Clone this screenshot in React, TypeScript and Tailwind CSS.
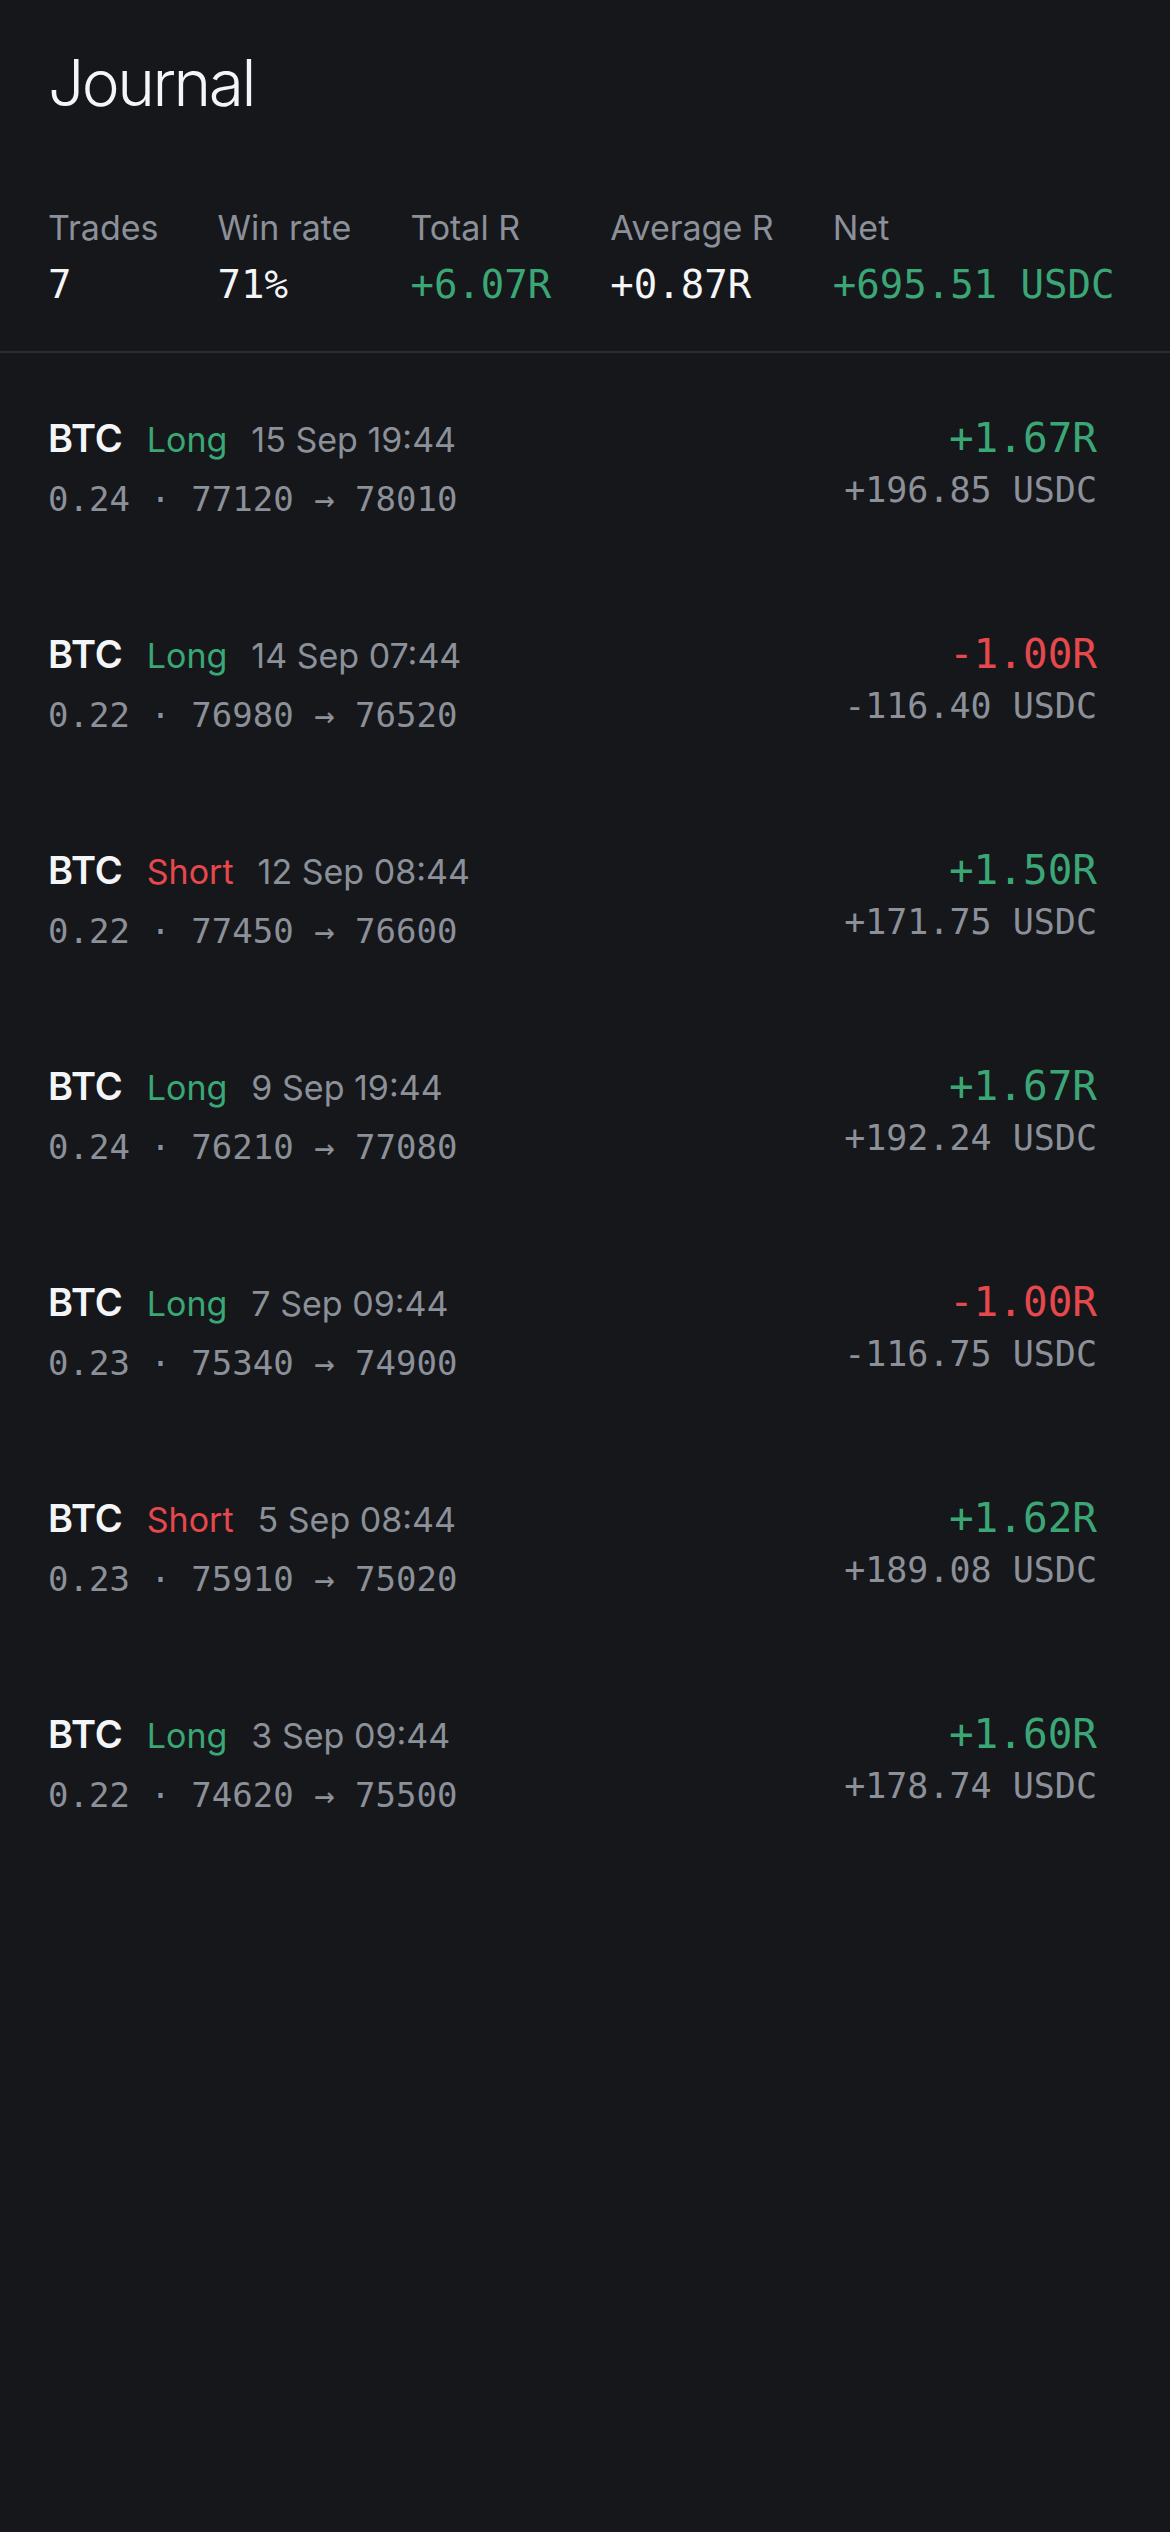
import React from "react";

type Trade = {
  side: "Long" | "Short";
  date: string;
  size: string;
  entry: string;
  exit: string;
  r: string;
  usdc: string;
  win: boolean;
};

const trades: Trade[] = [
  { side: "Long", date: "15 Sep 19:44", size: "0.24", entry: "77120", exit: "78010", r: "+1.67R", usdc: "+196.85 USDC", win: true },
  { side: "Long", date: "14 Sep 07:44", size: "0.22", entry: "76980", exit: "76520", r: "-1.00R", usdc: "-116.40 USDC", win: false },
  { side: "Short", date: "12 Sep 08:44", size: "0.22", entry: "77450", exit: "76600", r: "+1.50R", usdc: "+171.75 USDC", win: true },
  { side: "Long", date: "9 Sep 19:44", size: "0.24", entry: "76210", exit: "77080", r: "+1.67R", usdc: "+192.24 USDC", win: true },
  { side: "Long", date: "7 Sep 09:44", size: "0.23", entry: "75340", exit: "74900", r: "-1.00R", usdc: "-116.75 USDC", win: false },
  { side: "Short", date: "5 Sep 08:44", size: "0.23", entry: "75910", exit: "75020", r: "+1.62R", usdc: "+189.08 USDC", win: true },
  { side: "Long", date: "3 Sep 09:44", size: "0.22", entry: "74620", exit: "75500", r: "+1.60R", usdc: "+178.74 USDC", win: true },
];

const sans = "font-['Inter','Noto_Sans',sans-serif]";
const mono = "font-['DejaVu_Sans_Mono','Liberation_Mono',monospace]";

function Stat({ label, value, color }: { label: string; value: string; color: string }) {
  return (
    <div className="flex flex-col gap-[13px]">
      <div className={`${sans} text-[34px] leading-[41px] text-[#8b9099]`}>{label}</div>
      <div className={`${mono} text-[39px] leading-[48px] font-normal ${color}`}>{value}</div>
    </div>
  );
}

export default function App() {
  return (
    <div className={`min-h-screen w-full bg-[#16171b] ${sans}`}>
      <header className="px-12 pt-[51px]">
        <h1 className="text-[64px] leading-none font-light tracking-[-2.5px] text-[#f4f5f7]">Journal</h1>
      </header>
      <section className="flex gap-[59px] px-12 pt-[92px] pb-[42px] border-b-2 border-[#2a2c31]">
        <Stat label="Trades" value="7" color="text-[#f4f5f7]" />
        <Stat label="Win rate" value="71%" color="text-[#f4f5f7]" />
        <Stat label="Total R" value="+6.07R" color="text-[#3ba776]" />
        <Stat label="Average R" value="+0.87R" color="text-[#f4f5f7]" />
        <Stat label="Net" value="+695.51 USDC" color="text-[#3ba776]" />
      </section>
      <ul className="pt-[7px]">
        {trades.map((t, i) => (
          <li key={i} className="flex h-[216px] items-start justify-between pl-12 pr-[73px] pt-[56px]">
            <div className="flex flex-col gap-[19px]">
              <div className="flex h-[44px] items-baseline gap-[24px] text-[34px] leading-[44px]">
                <span className="font-semibold text-[38px] leading-[44px] text-[#f4f5f7]">BTC</span>
                <span className={t.side === "Long" ? "text-[#3ba776]" : "text-[#e5484d]"}>{t.side}</span>
                <span className="text-[#8b9099]">{t.date}</span>
              </div>
              <div className={`${mono} text-[34px] leading-[41px] text-[#8b9099]`}>
                {t.size} · {t.entry} → {t.exit}
              </div>
            </div>
            <div className="flex flex-col items-end gap-[7px] -mt-[2px]">
              <div className={`${mono} text-[41px] leading-[48px] ${t.win ? "text-[#3ba776]" : "text-[#e5484d]"}`}>
                {t.r}
              </div>
              <div className={`${mono} text-[35px] leading-[42px] text-[#8b9099]`}>{t.usdc}</div>
            </div>
          </li>
        ))}
      </ul>
    </div>
  );
}
